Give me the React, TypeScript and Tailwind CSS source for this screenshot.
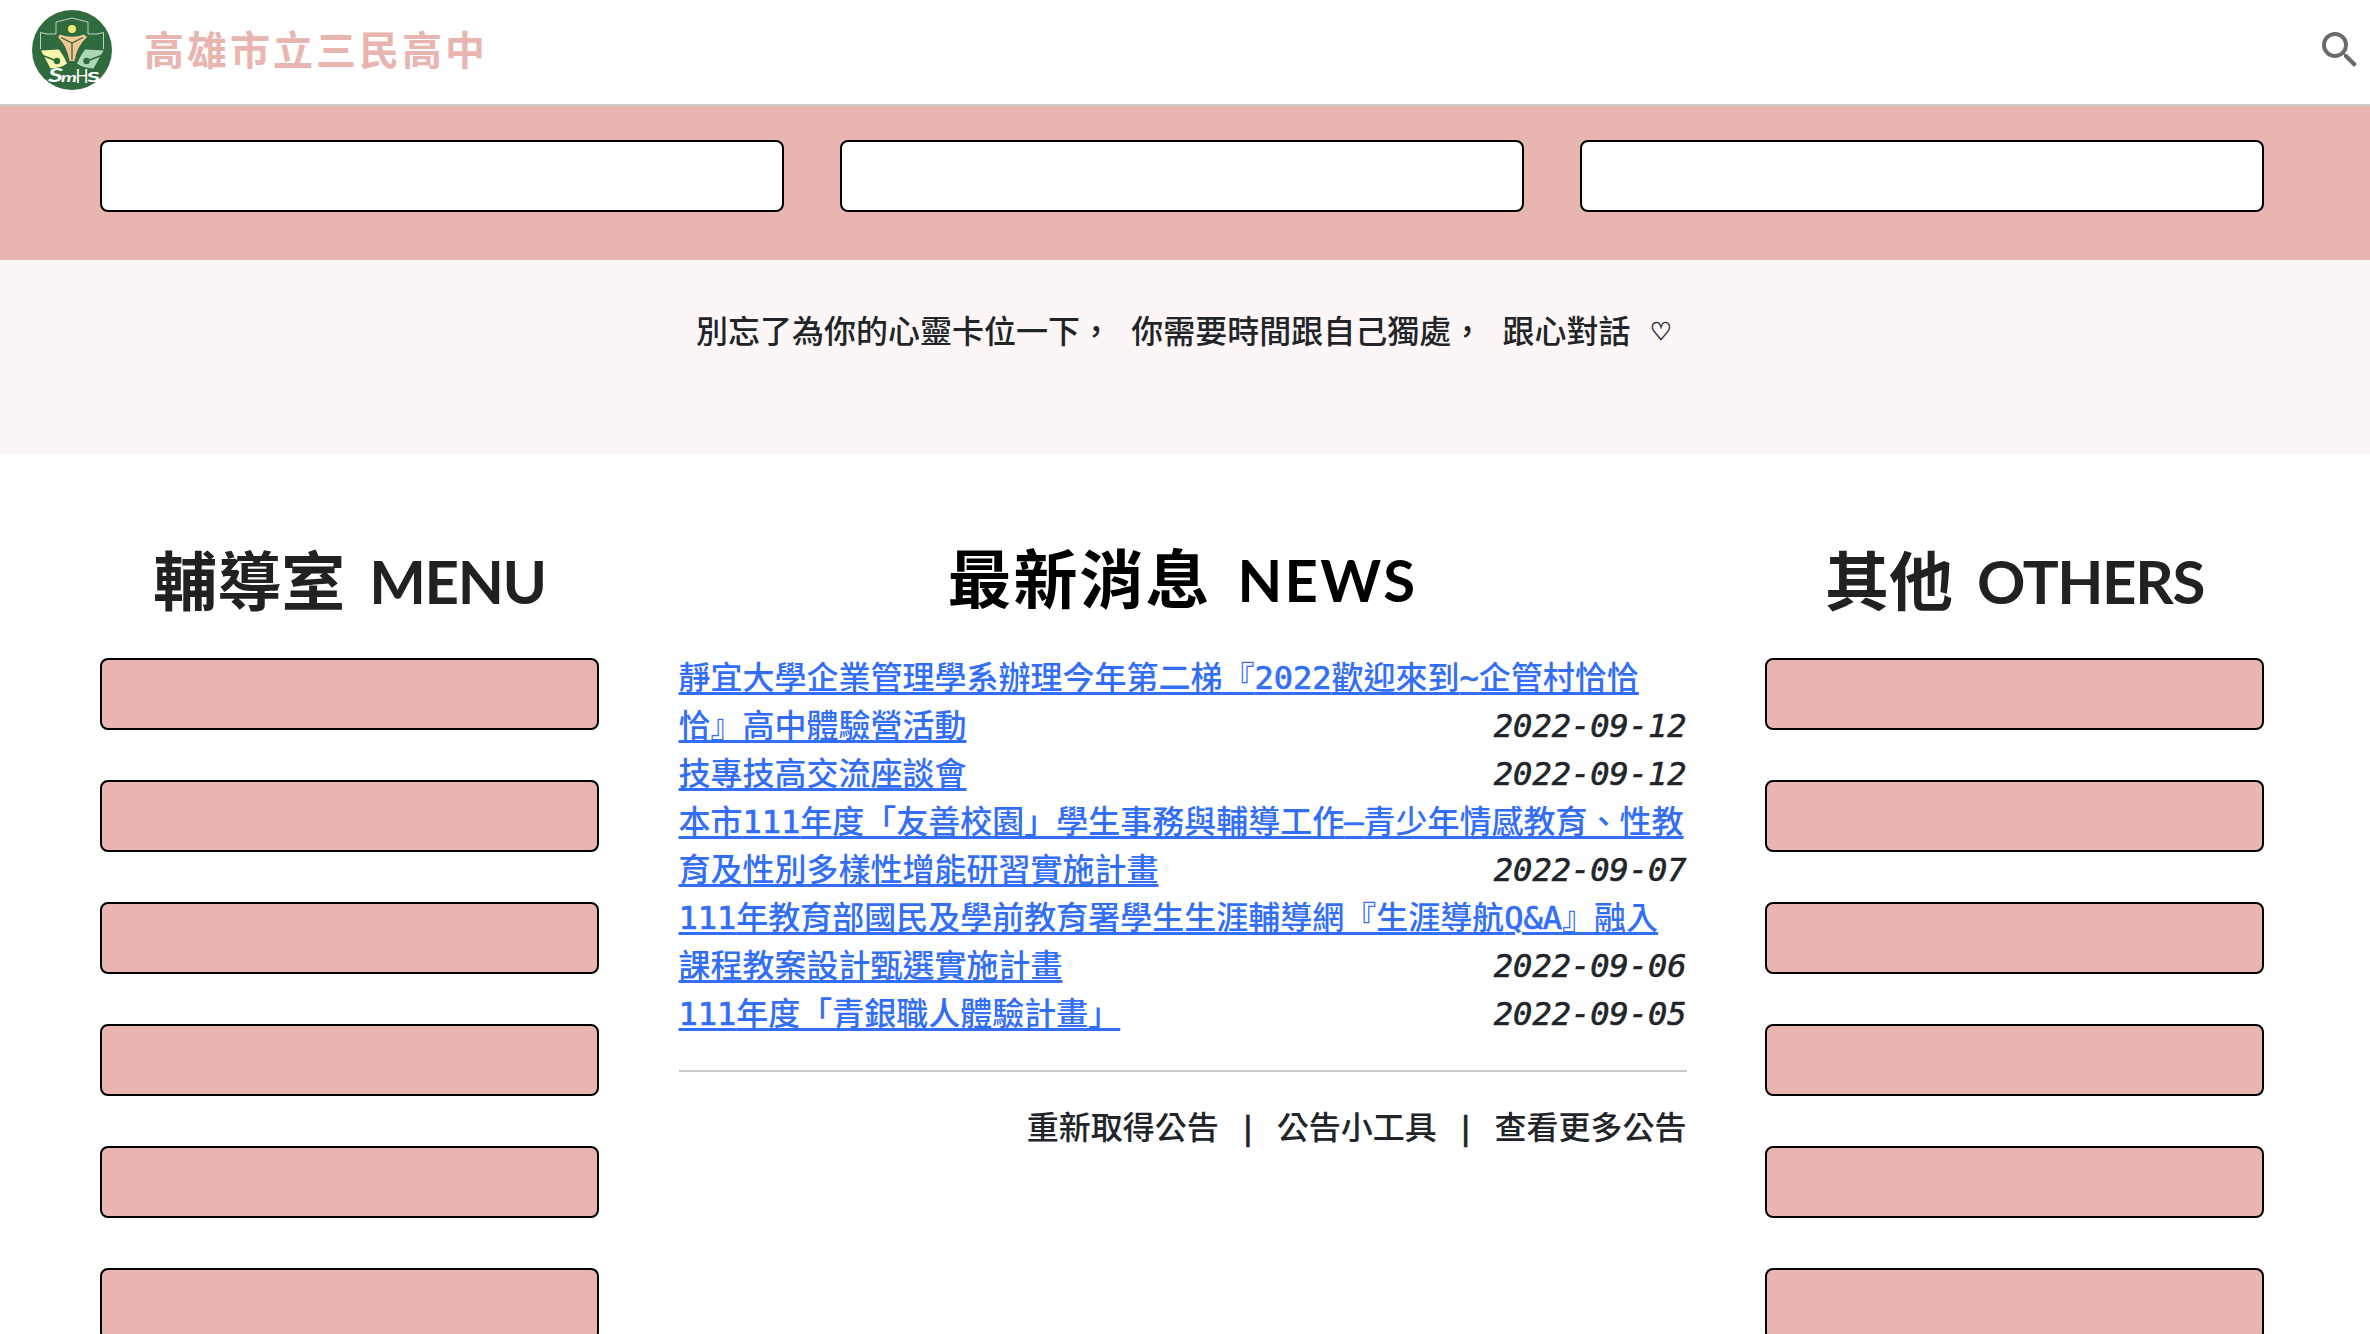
import React from "react";
import { MdSearch } from "react-icons/md";

const news = [
  {
    lines: ["靜宜大學企業管理學系辦理今年第二梯『2022歡迎來到~企管村恰恰", "恰』高中體驗營活動"],
    date: "2022-09-12",
  },
  { lines: ["技專技高交流座談會"], date: "2022-09-12" },
  {
    lines: ["本市111年度「友善校園」學生事務與輔導工作—青少年情感教育、性教", "育及性別多樣性增能研習實施計畫"],
    date: "2022-09-07",
  },
  {
    lines: ["111年教育部國民及學前教育署學生生涯輔導網『生涯導航Q&A』融入", "課程教案設計甄選實施計畫"],
    date: "2022-09-06",
  },
  { lines: ["111年度「青銀職人體驗計畫」"], date: "2022-09-05" },
];

function SchoolLogo() {
  return (
    <svg viewBox="0 0 80 80" className="h-20 w-20 shrink-0">
      <circle cx="40" cy="40" r="40" fill="#2f6b3c" />
      <path
        d="M8.5 39V22.5L15 24H24V12L40 8L56 12V24H65L71.500 22.500V39"
        fill="none"
        stroke="#bcd3c0"
        strokeWidth="1"
      />
      <circle cx="40" cy="19" r="4" fill="#f1ec78" />
      <path d="M26 27L28 24.500Q40 29 52 24.500L55 27Q45 36 42.500 51H37.500Q35 36 26 27Z" fill="#f2c795" />
      <path d="M29 27.500L40 33L51 27.500M40 33V50" fill="none" stroke="#2f6b3c" strokeWidth="1.300" />
      <path d="M9 40.500L27 39.500Q32 46 35 53.500Q29 58 18.500 58.500Z" fill="#fbf6ad" />
      <path d="M71.500 40.500L53 39.500Q48 46 45 53.500Q51 58 61.500 58.500Z" fill="#afd6b4" />
      <path d="M8 44.500L25 51" stroke="#2f6b3c" strokeWidth="1.600" />
      <path d="M72 44.500L55 51" stroke="#2f6b3c" strokeWidth="1.600" />
      <circle cx="25" cy="51" r="3.200" fill="#2f6b3c" />
      <circle cx="54.500" cy="51" r="3.200" fill="#2f6b3c" />
      <g fill="#fff" className="font-['Lato','Noto_Sans',sans-serif] font-bold italic">
        <text x="16" y="72" fontSize="18.5" textLength="15" lengthAdjust="spacingAndGlyphs">S</text>
        <text x="29" y="72" fontSize="14" textLength="16" lengthAdjust="spacingAndGlyphs">m</text>
      </g>
      <g fill="#fff" className="font-['Lato','Noto_Sans',sans-serif]">
        <text x="43.500" y="73" fontSize="19" textLength="13" lengthAdjust="spacingAndGlyphs">H</text>
        <text x="55" y="72" fontSize="14" fontWeight="900" textLength="13" lengthAdjust="spacingAndGlyphs">S</text>
      </g>
    </svg>
  );
}

/* Latin runs get a thin stroke so their weight sits level with the medium CJK glyphs. */
function MixedText({ text }: { text: string }) {
  return (
    <>
      {text.split(/([\x21-\x7e—]+)/).map((part, i) =>
        i % 2 ? (
          <span key={i} className="[-webkit-text-stroke:0.7px_currentColor]">
            {part}
          </span>
        ) : (
          part
        ),
      )}
    </>
  );
}

function ButtonColumn({ title, latin }: { title: string; latin: string }) {
  return (
    <section className="w-[499px] shrink-0">
      <h2 className="mb-6 flex h-[104px] items-center justify-center whitespace-pre text-[#212121]">
        <span className="pb-[10px] font-['Noto_Sans_CJK_TC',sans-serif] text-[64px] font-bold leading-none">{title}</span>
        <span className="ml-6 pb-[2px] font-['Lato',sans-serif] text-[60px] font-bold leading-none tracking-[-1.4px]">
          {latin}
        </span>
      </h2>
      <div className="flex flex-col gap-[50px]">
        {[0, 1, 2, 3, 4, 5].map((i) => (
          <a key={i} className="block h-[72px] rounded-lg border-2 border-black bg-[#e8b5b1]" />
        ))}
      </div>
    </section>
  );
}

export default function App() {
  return (
    <div className="h-[1334px] w-[2370px] overflow-hidden bg-white font-['DejaVu_Sans_Mono','Noto_Sans_CJK_TC',monospace] text-[32px] leading-[48px] text-[#212529]">
      <header className="flex h-[106px] items-center border-b-2 border-[#c8cbca] pl-8 pr-1.5 pb-1">
        <SchoolLogo />
        <h1 className="ml-8 flex-1 pb-[5px] font-['Noto_Sans_CJK_TC',sans-serif] text-[40px] font-bold tracking-[3px] text-[#e8b5b1]">
          高雄市立三民高中
        </h1>
        <MdSearch className="h-12 w-12 text-[#6b6b6b]" />
      </header>

      <div className="grid h-[154px] grid-cols-3 gap-14 bg-[#e8b5b1] pt-[34px] pl-[100px] pr-[106px]">
        {[0, 1, 2].map((i) => (
          <a key={i} className="block h-[72px] rounded-lg border-2 border-black bg-white" />
        ))}
      </div>

      <div className="flex h-[194px] justify-center whitespace-pre bg-[#fdf6f6] pt-12 pr-[2px] font-medium">
        別忘了為你的心靈卡位一下， 你需要時間跟自己獨處， 跟心對話{" "}
        <span className="font-['DejaVu_Sans',sans-serif] text-[25px] font-normal [-webkit-text-stroke:0.5px_currentColor]">♡</span>
      </div>

      <main className="flex justify-between pt-[76px] pl-[100px] pr-[106px]">
        <ButtonColumn title="輔導室" latin="MENU" />
        <section className="-mr-px w-[1008px] shrink-0">
          <h2 className="mb-5 flex h-[104px] items-center justify-center text-black">
            <span className="pb-[14px] font-['Noto_Sans_CJK_TC',sans-serif] text-[64px] font-bold leading-none tracking-[2px]">最新消息</span>
            <span className="ml-[26px] pb-[5px] font-['Lato',sans-serif] text-[58px] font-bold leading-none tracking-[2.4px]">NEWS</span>
          </h2>
          <ul>
            {news.map((item, n) => (
              <li key={n} className="flex items-end justify-between whitespace-nowrap">
                <a className="w-0 flex-1 font-medium text-[#336ef8]">
                  {item.lines.map((line) => (
                    <span key={line} className="block h-12 underline decoration-[3px] underline-offset-[3px]">
                      <MixedText text={line} />
                    </span>
                  ))}
                </a>
                <i className="h-12 [-webkit-text-stroke:0.6px_currentColor]">{item.date}</i>
              </li>
            ))}
          </ul>
          <hr className="mt-8 border-t-2 border-[#c8cbca]" />
          <p className="mt-8 whitespace-pre text-right font-medium">
            <MixedText text="重新取得公告 | 公告小工具 | 查看更多公告" />
          </p>
        </section>
        <ButtonColumn title="其他" latin="OTHERS" />
      </main>
    </div>
  );
}
